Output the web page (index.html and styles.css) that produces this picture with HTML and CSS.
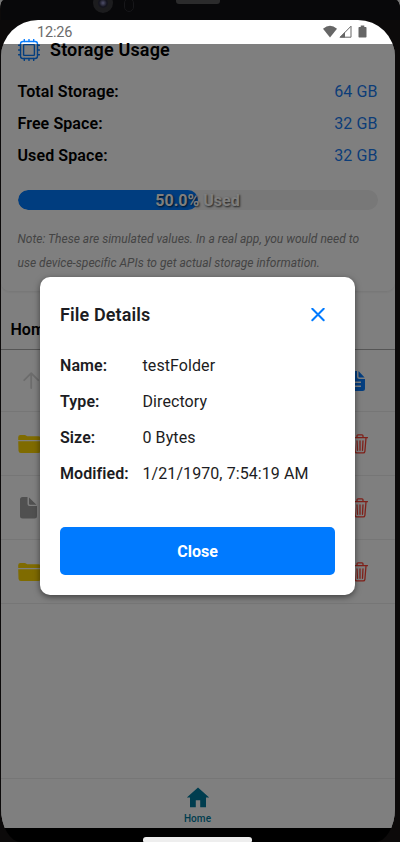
FILE: index.html
```html
<!DOCTYPE html>
<html lang="en">
<head>
<meta charset="utf-8">
<title>File Manager</title>
<link rel="stylesheet" href="styles.css">
</head>
<body>
<svg class="defs" width="0" height="0">
  <symbol id="folder" viewBox="0 0 24 20"><path d="M.2 6V3.2Q.2 1 2.4 1H6.6Q7.6 1 8.4 1.7Q9.2 2.3 10 2.3H20.6Q22.8 2.3 23 4.5V6Z M.2 7.2H23.4L22.9 16.8Q22.6 19 20.5 19H2.8Q.7 19 .5 16.8Z"/></symbol>
  <symbol id="trash" viewBox="0 0 16 20"><path d="M.5 3.7H15.5M2 4L3.1 17.3Q3.3 18.9 4.8 18.9H11.2Q12.7 18.9 12.9 17.3L14 4M5 3.5V1.8Q5 .8 6 .8H10Q11 .8 11 1.8V3.5M8 6.8V16.3M5 6.8L5.5 16.3M11 6.8L10.5 16.3" fill="none" stroke="currentColor" stroke-width="1.3" stroke-linecap="round"/></symbol>
</svg>
<div class="phone">
  <div class="bezel">
    <span class="camera"><i></i></span><span class="sensor"></span><span class="speaker"></span>
  </div>
  <div class="screen">
    <header class="status">
      <span class="time">12:26</span>
      <svg class="signals" width="45" height="14" viewBox="0 0 45 14">
        <path d="M0 3.7Q7-2 14 3.7L7 12.5Z" fill="#666"/>
        <path d="M17.2 12.2L28 1.2V12.2Z" fill="none" stroke="#666"/><path d="M16.5 12.5L22 7V12.5Z" fill="#666"/>
        <path d="M36.3 2H37.7V.5H41.3V2H42.7Q43.5 2 43.5 2.8V11.8Q43.5 12.6 42.7 12.6H36.3Q35.5 12.6 35.5 11.8V2.8Q35.5 2 36.3 2Z" fill="#666"/>
      </svg>
    </header>
    <main class="app">
      <section class="card">
        <div class="card-title">
          <svg width="22" height="22" viewBox="0 0 22 22" fill="none" stroke="#087dff" stroke-width="1.4"><rect x="2.5" y="2.5" width="17" height="17" rx="2.5"/><rect x="5.6" y="5.6" width="10.8" height="10.8" rx=".6"/><path d="M6.3.5V2.5M11 .5V2.5M15.7.5V2.5M6.3 19.5V21.5M11 19.5V21.5M15.7 19.5V21.5M.5 6.3H2.5M.5 11H2.5M.5 15.7H2.5M19.5 6.3H21.5M19.5 11H21.5M19.5 15.7H21.5" stroke-linecap="round"/></svg>
          <h1>Storage Usage</h1>
        </div>
        <div class="stat"><b>Total Storage:</b><span>64 GB</span></div>
        <div class="stat"><b>Free Space:</b><span>32 GB</span></div>
        <div class="stat"><b>Used Space:</b><span>32 GB</span></div>
        <div class="progress"><div class="fill"></div><span>50.0% Used</span></div>
        <p class="note">Note: These are simulated values. In a real app, you would need to<br>use device-specific APIs to get actual storage information.</p>
      </section>
      <div class="path">Home</div>
      <div class="row up">
        <svg class="arrow" width="18" height="18" viewBox="0 0 18 18" fill="none" stroke="#d8d8d8" stroke-width="1.8"><path d="M9.2 16V1.5M2.2 8.2L9.2 1.2L16.2 8.2" stroke-linecap="round" stroke-linejoin="round"/></svg>
        <svg class="doc" width="16" height="20" viewBox="0 0 16 20"><path d="M2.5 0H8V5.5Q8 8 10.5 8H16V17.5Q16 20 13.5 20H2.5Q0 20 0 17.5V2.5Q0 0 2.5 0ZM9.5 0L15.6 6.5H10.5Q9.5 6.5 9.5 5.5ZM4 10.5V12H12V10.5ZM4 14.5V16H12V14.5Z" fill="#087dff" fill-rule="evenodd"/></svg>
      </div>
      <div class="row"><svg class="folder" width="24" height="20"><use href="#folder"/></svg><svg class="trash" width="16" height="20"><use href="#trash"/></svg></div>
      <div class="row"><svg class="file" width="17" height="22" viewBox="0 0 17 22"><path d="M2.5 0H7.5V7Q7.5 9 9.5 9H17V19Q17 21.5 14.5 21.5H2.5Q0 21.5 0 19V2.5Q0 0 2.5 0ZM9 .5L16.5 7.8H10Q9 7.8 9 6.8Z" fill="#a0a0a0"/></svg><svg class="trash" width="16" height="20"><use href="#trash"/></svg></div>
      <div class="row"><svg class="folder" width="24" height="20"><use href="#folder"/></svg><svg class="trash" width="16" height="20"><use href="#trash"/></svg></div>
      <nav class="tabs">
        <svg width="24" height="21" viewBox="0 0 24 21"><path d="M12 .5L.8 10.5H4V20.2H9.8V13.2H14.2V20.2H20V10.5H23.2Z" fill="#007a9e"/></svg>
        <span>Home</span>
      </nav>
      <div class="overlay">
        <div class="modal">
          <div class="modal-head">
            <h2>File Details</h2>
            <svg width="14" height="14" viewBox="0 0 14 14"><path d="M1.3 .8L12.7 12.2M12.7 .8L1.3 12.2" stroke="#007aff" stroke-width="2" stroke-linecap="round"/></svg>
          </div>
          <dl>
            <dt>Name:</dt><dd>testFolder</dd>
            <dt>Type:</dt><dd>Directory</dd>
            <dt>Size:</dt><dd>0 Bytes</dd>
            <dt>Modified:</dt><dd>1/21/1970, 7:54:19 AM</dd>
          </dl>
          <button>Close</button>
        </div>
      </div>
    </main>
    <footer class="gesture"><i></i></footer>
  </div>
</div>
</body>
</html>
```
FILE: styles.css
```css
* { box-sizing: border-box; }
body { margin: 0; background: #777; font-family: Roboto, "Liberation Sans", sans-serif; font-size: 16px; }
h1, h2, p, dl, dd { margin: 0; }
svg { display: block; flex: none; }
.defs { position: absolute; }
.phone { width: 400px; height: 842px; background: #0c0a0a; overflow: hidden; padding-left: 1px; border-radius: 4px 4px 0 0 / 9px 9px 0 0; }
.bezel { height: 20px; position: relative; background: #08080a; }
.camera { position: absolute; left: 92px; top: -7px; width: 20px; height: 20px; border-radius: 50%; background: #1c1c1e; display: grid; place-items: center; }
.camera i { width: 10px; height: 10px; border-radius: 50%; background: radial-gradient(circle, #50506c, #15151f 55%); }
.sensor { position: absolute; left: 123px; top: -2px; width: 10px; height: 14px; border: 1px solid #17171a; border-radius: 5px; }
.speaker { position: absolute; left: 175px; top: -4px; width: 44px; height: 8px; border-radius: 3px; background: #2b2b2c; }
.screen { width: 394px; height: 822px; border-radius: 37px 37px 20px 20px / 37px 37px 34px 34px; overflow: hidden; background: #000; }
.status { height: 23.5px; background: #fff; display: flex; justify-content: space-between; align-items: center; padding: 1px 27px 0 36px; }
.time { font-size: 14.5px; color: #6b6b6b; letter-spacing: -.2px; }
.app { position: relative; height: 784px; background: #fff; display: flex; flex-direction: column; }
.card { height: 248px; flex: none; padding: 0 17.5px 0 16.5px; border-radius: 0 0 9px 9px; border-bottom: 1px solid #f0f0f0; box-shadow: 0 1px 2px #0000000d; }
.card-title { height: 14px; margin-top: -1px; display: flex; align-items: center; gap: 10px; padding-left: .5px; }
h1, h2 { font-size: 18px; font-weight: 600; letter-spacing: .1px; }
h1 { line-height: 14px; letter-spacing: .15px; }
.stat { height: 32px; display: flex; justify-content: space-between; align-items: center; }
.stat:nth-child(2) { margin-top: 18.5px; }
.stat b { font-weight: 600; letter-spacing: .1px; }
.stat span { color: #187bf0; letter-spacing: .1px; }
.progress { position: relative; height: 20px; margin-top: 19px; border-radius: 10px; background: #f0f0f0; display: flex; overflow: hidden; }
.fill { width: 50%; border-radius: 10px; background: #007aff; }
.progress span { position: absolute; inset: 0; text-align: center; line-height: 21px; font-weight: 700; color: #fff; text-shadow: 1px 1px 2px #000000bf; }
.note { margin-top: 17px; font-size: 12px; font-style: italic; line-height: 24px; color: #888; white-space: nowrap; letter-spacing: .015px; }
.path { height: 58.5px; flex: none; padding: 28px 9.5px 0; line-height: 20px; font-weight: 600; border-bottom: 1px solid #aaa; }
.row { height: 64px; flex: none; padding: 0 27.5px 0 16.5px; display: flex; align-items: center; justify-content: space-between; border-bottom: 1px solid #ededed; }
.row.up { height: 62px; padding: 0 30px 0 20.5px; }
.folder { fill: #ffd700; }
.file { margin-left: 2.5px; }
.trash { color: #ff4033; }
.tabs { margin-top: auto; height: 49.5px; border-top: 1px solid #ededed; display: flex; flex-direction: column; align-items: center; padding: 8px 1px 0 0; color: #007a9e; font-size: 10px; font-weight: 500; letter-spacing: .1px; }
.tabs span { margin-top: 4px; line-height: 14px; }
.overlay { position: absolute; inset: 0; background: #00000080; display: grid; place-items: center; padding-right: 1px; }
.modal { width: 315px; height: 318px; background: #fff; border-radius: 10px; padding: 20px; box-shadow: 0 2px 6px #00000080; color: #1c1c22; }
.modal-head { height: 36px; display: flex; justify-content: space-between; align-items: center; padding-right: 10px; }
dl { display: grid; grid-template-columns: 82.5px 1fr; line-height: 36px; margin-top: 15px; white-space: nowrap; letter-spacing: .08px; }
dt { font-weight: 600; }
button { display: block; width: 100%; height: 48px; margin-top: 35px; border: 0; border-radius: 5px; background: #007aff; color: #fff; font: 700 16px Roboto, sans-serif; padding: 1px 0 0; }
.gesture { height: 14.5px; display: flex; justify-content: center; align-items: flex-end; padding-right: 1px; }
.gesture i { width: 109px; height: 5px; background: #eee; border-radius: 3px 3px 1px 1px; }
```
